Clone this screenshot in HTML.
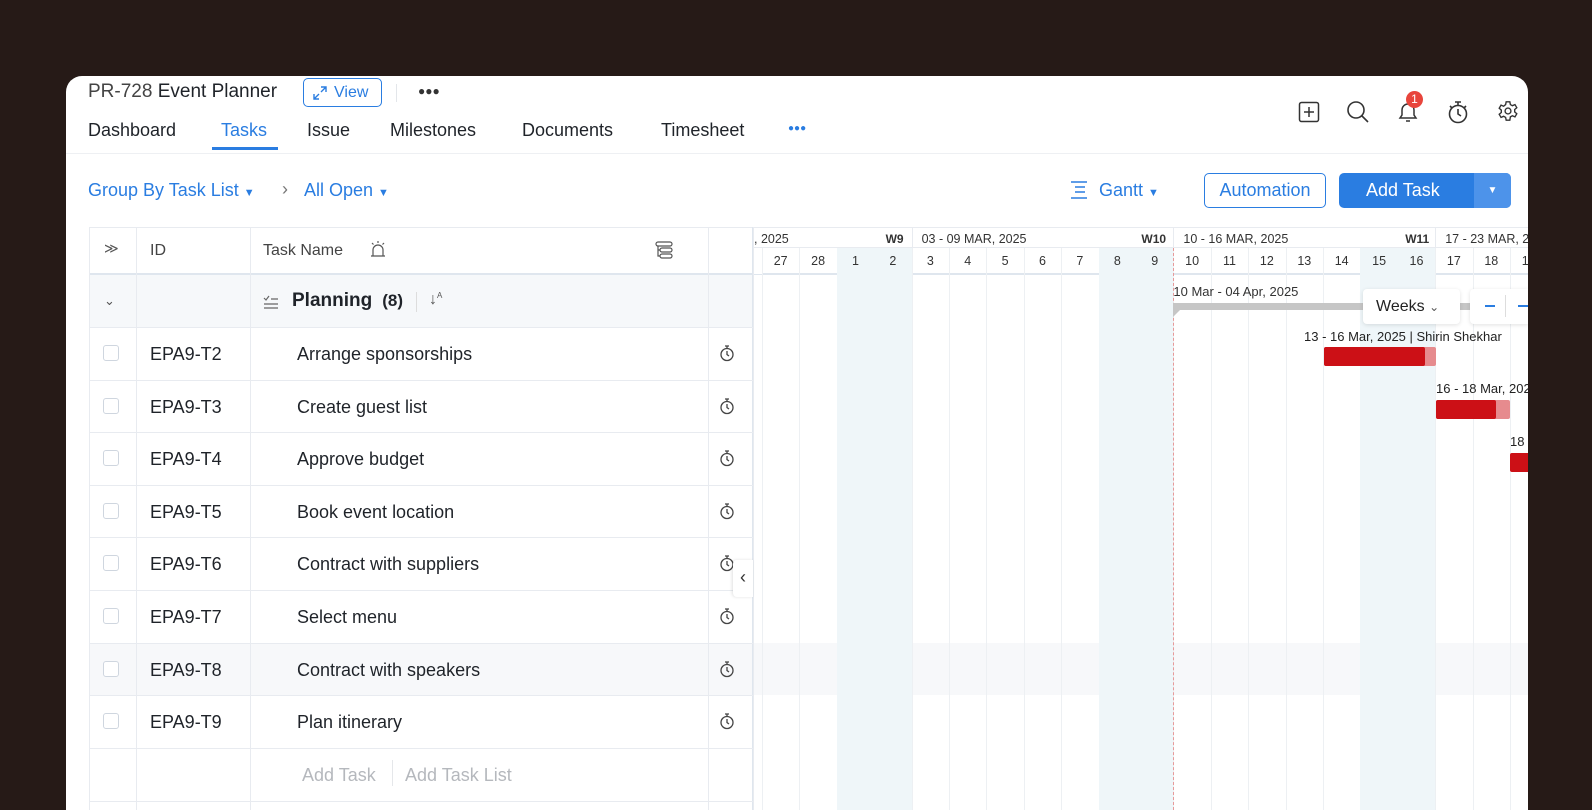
<!DOCTYPE html>
<html><head><meta charset="utf-8"><style>
*{box-sizing:border-box;margin:0;padding:0}
html,body{width:1592px;height:810px;overflow:hidden}
body{background:#261a17;font-family:"Liberation Sans",sans-serif;position:relative;color:#1f2329}
.card{position:absolute;left:66px;top:76px;width:1462px;height:734px;background:#fff;border-radius:16px 16px 0 0;overflow:hidden}
.a{position:absolute;white-space:nowrap}
.blue{color:#2a7de1}
.hl{position:absolute;height:1px;background:#e8ebf0}
.vl{position:absolute;width:1px;background:#e8ebf0}
.cb{position:absolute;width:16px;height:16px;border:1.5px solid #cfd6df;border-radius:3px;background:#fff}
.row{font-size:18px}
</style></head><body>
<div class="card" id="c">
 <div class="a" style="left:22px;top:5px;font-size:19px;color:#444">PR-728 <span style="color:#1f2329">Event Planner</span></div>
 <div class="a" style="left:237px;top:2px;width:79px;height:29px;border:1px solid #2a7de1;border-radius:5px;color:#2a7de1;font-size:16px;line-height:27px;padding-left:30px">View</div>
 <svg class="a" style="left:246px;top:9px" width="16" height="16" viewBox="0 0 16 16" fill="none" stroke="#2a7de1" stroke-width="1.4"><path d="M9 2h5v5M14 2l-5 5M7 14H2V9M2 14l5-5"/></svg>
 <div class="a" style="left:330px;top:8px;width:1px;height:18px;background:#e3e6ea"></div>
 <div class="a" style="left:352px;top:8px;font-size:12px;color:#333">●●●</div>
 <div class="a" style="left:22px;top:44px;font-size:18px">Dashboard</div>
 <div class="a blue" style="left:155px;top:44px;font-size:18px">Tasks</div>
 <div class="a" style="left:241px;top:44px;font-size:18px">Issue</div>
 <div class="a" style="left:324px;top:44px;font-size:18px">Milestones</div>
 <div class="a" style="left:456px;top:44px;font-size:18px">Documents</div>
 <div class="a" style="left:595px;top:44px;font-size:18px">Timesheet</div>
 <div class="a blue" style="left:722px;top:47px;font-size:10px">●●●</div>
 <div class="a" style="left:146px;top:71px;width:66px;height:3px;background:#2a7de1"></div>
 <div class="hl" style="left:0;top:77px;width:1462px;background:#eef0f3"></div>
 <svg class="a" style="left:1232px;top:25px" width="22" height="22" viewBox="0 0 22 22" fill="none" stroke="#333" stroke-width="1.5"><rect x="1.5" y="1.5" width="19" height="19" rx="2"/><path d="M11 6v10M6 11h10"/></svg>
 <svg class="a" style="left:1280px;top:24px" width="24" height="24" viewBox="0 0 24 24" fill="none" stroke="#333" stroke-width="1.6"><circle cx="10" cy="10" r="8"/><path d="M16 16l6 6"/></svg>
 <svg class="a" style="left:1330px;top:24px" width="24" height="24" viewBox="0 0 24 24" fill="none" stroke="#333" stroke-width="1.5"><path d="M4 18h16l-2-3v-5a6 6 0 0 0-12 0v5zM10 21h4"/></svg>
 <div class="a" style="left:1340px;top:15px;width:17px;height:17px;border-radius:50%;background:#e8453c;color:#fff;font-size:12px;text-align:center;line-height:17px">1</div>
 <svg class="a" style="left:1380px;top:23px" width="24" height="26" viewBox="0 0 24 26" fill="none" stroke="#333" stroke-width="1.6"><circle cx="12" cy="15" r="8.5"/><path d="M9 3h6M12 3v3M12 10v5l3 2M4 7l2 2M20 7l-2 2"/></svg>
 <svg class="a" style="left:1431px;top:24px" width="22" height="22" viewBox="0 0 24 24" fill="none" stroke="#333" stroke-width="1.5"><circle cx="12" cy="12" r="3.2"/><path d="M10 2h4l.6 3 2.2 1.2 2.8-1.2 2 3.4-2.3 2v2.6l2.3 2-2 3.4-2.8-1.2-2.2 1.2L14 22h-4l-.6-3-2.2-1.2-2.8 1.2-2-3.4 2.3-2v-2.6l-2.3-2 2-3.4 2.8 1.2L9.4 5z"/></svg>
 <div class="a blue" style="left:22px;top:104px;font-size:18px">Group By Task List <span style="font-size:11px">▼</span></div>
 <div class="a" style="left:216px;top:103px;font-size:18px;color:#777">›</div>
 <div class="a blue" style="left:238px;top:104px;font-size:18px">All Open <span style="font-size:11px">▼</span></div>
 <svg class="a" style="left:1004px;top:104px" width="18" height="20" viewBox="0 0 18 20" stroke="#2a7de1" stroke-width="1.4"><path d="M1 2h16M5 7h10M5 12h10M1 18h16"/></svg>
 <div class="a blue" style="left:1033px;top:104px;font-size:18px">Gantt <span style="font-size:11px">▼</span></div>
 <div class="a blue" style="left:1138px;top:97px;width:122px;height:35px;border:1px solid #2a7de1;border-radius:5px;font-size:18px;text-align:center;line-height:33px">Automation</div>
 <div class="a" style="left:1273px;top:97px;width:172px;height:35px;background:#2a7de1;border-radius:5px;color:#fff;font-size:18px;line-height:35px;padding-left:27px">Add Task</div>
 <div class="a" style="left:1408px;top:97px;width:37px;height:35px;background:#4d93ea;border-radius:0 5px 5px 0;color:#fff;font-size:10px;text-align:center;line-height:35px">▼</div>
</div>
<script>
const c=document.getElementById('c');
function add(h){c.insertAdjacentHTML('beforeend',h)}
const T=151;
const L=23;
const H=734-T-21;
add(`<div class="a" style="left:${L}px;top:${T}px;width:664px;height:47px;border-top:1px solid #e8ebf0"></div>`);
add(`<div class="hl" style="left:${L}px;top:${T+46}px;width:1439px;height:2px;background:#dfe6ee"></div>`);
add(`<div class="a" style="left:${L}px;top:${T+48}px;width:664px;height:52px;background:#f6f8fa"></div>`);
const rowTop=i=>T+100+i*52.6;
add(`<div class="a" style="left:${L}px;top:${rowTop(6)}px;width:1439px;height:52px;background:#f7f8fa"></div>`);
const G0=686,dw=37.4,d27=696;
const days=[26,27,28,1,2,3,4,5,6,7,8,9,10,11,12,13,14,15,16,17,18,19];
days.forEach((d,k)=>{const x=d27+(k-1)*dw;
 if([1,2,8,9,15,16].includes(d)) add(`<div class="a" style="left:${x}px;top:${T+21}px;width:${dw}px;height:${H}px;background:#eff6f9"></div>`);
 if(x+dw<1460) add(`<div class="vl" style="left:${x+dw}px;top:${T+21}px;height:${H}px;background:#edf0f3"></div>`);
 if(k>0) add(`<div class="a" style="left:${x}px;top:${T+27}px;width:${dw}px;text-align:center;font-size:12.5px;color:#333">${d}</div>`);
});
add(`<div class="a" style="left:${G0}px;top:${T}px;width:776px;height:21px;border-top:1px solid #e8ebf0;border-bottom:1px solid #e8ebf0;background:#fff"></div>`);
add(`<div class="a" style="left:${G0}px;top:${T+21}px;width:10px;height:26px;background:#fff"></div>`);
const xb=i=>d27+i*dw;
[4,11,18].forEach(i=>add(`<div class="vl" style="left:${xb(i)}px;top:${T}px;height:21px"></div>`));
add(`<div class="a" style="left:${G0+2}px;top:${T+5}px;font-size:12.5px;color:#333">, 2025</div>`);
add(`<div class="a" style="left:${xb(4)-26}px;top:${T+5}px;font-size:12px;font-weight:bold;color:#333">W9</div>`);
add(`<div class="a" style="left:${xb(4)+10}px;top:${T+5}px;font-size:12.5px;color:#333">03 - 09 MAR, 2025</div>`);
add(`<div class="a" style="left:${xb(11)-32}px;top:${T+5}px;font-size:12px;font-weight:bold;color:#333">W10</div>`);
add(`<div class="a" style="left:${xb(11)+10}px;top:${T+5}px;font-size:12.5px;color:#333">10 - 16 MAR, 2025</div>`);
add(`<div class="a" style="left:${xb(18)-30}px;top:${T+5}px;font-size:12px;font-weight:bold;color:#333">W11</div>`);
add(`<div class="a" style="left:${xb(18)+10}px;top:${T+5}px;font-size:12.5px;color:#333">17 - 23 MAR, 2025</div>`);
add(`<div class="vl" style="left:${G0}px;top:${T}px;height:${734-T}px;background:#dfe6ee;width:2px"></div>`);
const x10=xb(11);
add(`<div class="a" style="left:${x10}px;top:${T+21}px;height:${H}px;border-left:1px dashed #e79a9a"></div>`);
add(`<div class="a" style="left:${x10}px;top:${T+57}px;font-size:13px;color:#333">10 Mar - 04 Apr, 2025</div>`);
add(`<div class="a" style="left:${x10}px;top:${T+76}px;width:300px;height:7px;background:#c6c6c6"></div>`);
add(`<svg class="a" style="left:${x10}px;top:${T+82}px" width="8" height="8"><path d="M0 0h8L0 8z" fill="#c6c6c6"/></svg>`);
add(`<div class="a" style="left:1297px;top:213px;width:97px;height:35px;background:#fff;border-radius:4px;box-shadow:0 1px 4px rgba(0,0,0,.12);font-size:16px;line-height:35px;padding-left:13px;color:#222">Weeks <span style="font-size:12px;color:#555">⌄</span></div>`);
add(`<div class="a" style="left:1404px;top:213px;width:58px;height:35px;background:#fff;border-radius:4px 0 0 4px;box-shadow:0 1px 4px rgba(0,0,0,.12)"><div class="a" style="left:15px;top:16px;width:10px;height:1.5px;background:#2a7de1"></div><div class="a" style="left:35px;top:6px;width:1px;height:22px;background:#ddd"></div><div class="a" style="left:48px;top:16px;width:10px;height:1.5px;background:#2a7de1"></div></div>`);
add(`<div class="a" style="left:1238px;top:253px;font-size:13px;color:#222">13 - 16 Mar, 2025 | Shirin Shekhar</div>`);
add(`<div class="a" style="left:1258px;top:271px;width:112px;height:19px;background:#e68b8e;border-radius:2px"><div style="width:101px;height:19px;background:#cc1016;border-radius:2px"></div></div>`);
add(`<div class="a" style="left:1370px;top:305px;font-size:13px;color:#222">16 - 18 Mar, 2025</div>`);
add(`<div class="a" style="left:1370px;top:324px;width:74px;height:19px;background:#e68b8e;border-radius:2px"><div style="width:60px;height:19px;background:#cc1016;border-radius:2px"></div></div>`);
add(`<div class="a" style="left:1444px;top:358px;font-size:13px;color:#222">18 - 20</div>`);
add(`<div class="a" style="left:1444px;top:377px;width:18px;height:19px;background:#cc1016;border-radius:2px 0 0 2px"></div>`);
[L,70,184,642,687].forEach(x=>add(`<div class="vl" style="left:${x}px;top:${T}px;height:${734-T}px"></div>`));
add(`<div class="a" style="left:38px;top:${T+13}px;font-size:14px;color:#555">≫</div>`);
add(`<div class="a" style="left:84px;top:${T+15}px;font-size:16px;color:#444">ID</div>`);
add(`<div class="a" style="left:197px;top:${T+15}px;font-size:16px;color:#444">Task Name</div>`);
add(`<svg class="a" style="left:304px;top:${T+13}px" width="16" height="18" viewBox="0 0 16 18" fill="none" stroke="#555" stroke-width="1.2"><path d="M3 16V10a5 5 0 0 1 10 0v6M1 16h14M8 1v2M2 3l1.5 1.5M14 3l-1.5 1.5"/></svg>`);
add(`<svg class="a" style="left:589px;top:${T+14}px" width="18" height="18" viewBox="0 0 18 18" fill="none" stroke="#555" stroke-width="1.2"><rect x="1" y="1" width="16" height="4" rx="2"/><rect x="5" y="7" width="12" height="4" rx="2"/><rect x="5" y="13" width="12" height="4" rx="2"/><path d="M3 5v10h2M3 9h2"/></svg>`);
add(`<div class="a" style="left:38px;top:${T+66}px;font-size:13px;color:#555">⌄</div>`);
add(`<svg class="a" style="left:197px;top:${T+68}px" width="16" height="14" fill="none" stroke="#666" stroke-width="1.2"><path d="M1 3l2 2 3-4M8 4h7M1 9h14M1 13h14"/></svg>`);
add(`<div class="a" style="left:226px;top:${T+63}px;font-size:19px;font-weight:bold;color:#1f2329">Planning <span style="font-weight:bold;font-size:17px">&nbsp;(8)</span></div>`);
add(`<div class="a" style="left:350px;top:${T+65}px;width:1px;height:20px;background:#ddd"></div>`);
add(`<div class="a" style="left:363px;top:${T+64}px;font-size:16px;color:#555">↓<span style="font-size:8px;position:relative;top:-6px">A</span></div>`);
const tasks=[["T2","Arrange sponsorships"],["T3","Create guest list"],["T4","Approve budget"],["T5","Book event location"],["T6","Contract with suppliers"],["T7","Select menu"],["T8","Contract with speakers"],["T9","Plan itinerary"]];
tasks.forEach((t,i)=>{const y=rowTop(i);
 add(`<div class="hl" style="left:${L}px;top:${y}px;width:664px"></div>`);
 add(`<div class="cb" style="left:37px;top:${y+18}px"></div>`);
 add(`<div class="a row" style="left:84px;top:${y+17}px">EPA9-${t[0]}</div>`);
 add(`<div class="a row" style="left:231px;top:${y+17}px">${t[1]}</div>`);
 add(`<svg class="a" style="left:653px;top:${y+17}px" width="16" height="18" viewBox="0 0 16 18" fill="none" stroke="#444" stroke-width="1.3"><circle cx="8" cy="10.5" r="6"/><path d="M6 2h4M8 2v2.5M8 7v3.5l2 1.5"/></svg>`);
});
const ya=rowTop(8);
add(`<div class="hl" style="left:${L}px;top:${ya}px;width:664px"></div>`);
add(`<div class="a" style="left:236px;top:${ya+17}px;font-size:18px;color:#b5b8bd">Add Task</div>`);
add(`<div class="a" style="left:326px;top:${ya+12}px;width:1px;height:26px;background:#e5e7ea"></div>`);
add(`<div class="a" style="left:339px;top:${ya+17}px;font-size:18px;color:#b5b8bd">Add Task List</div>`);
add(`<div class="hl" style="left:${L}px;top:${ya+53}px;width:664px"></div>`);
add(`<div class="a" style="left:667px;top:484px;width:20px;height:37px;background:#fff;border-radius:4px 0 0 4px;box-shadow:-1px 0 3px rgba(0,0,0,.12);font-size:18px;text-align:center;line-height:35px;color:#333">‹</div>`);
</script>
</body></html>
